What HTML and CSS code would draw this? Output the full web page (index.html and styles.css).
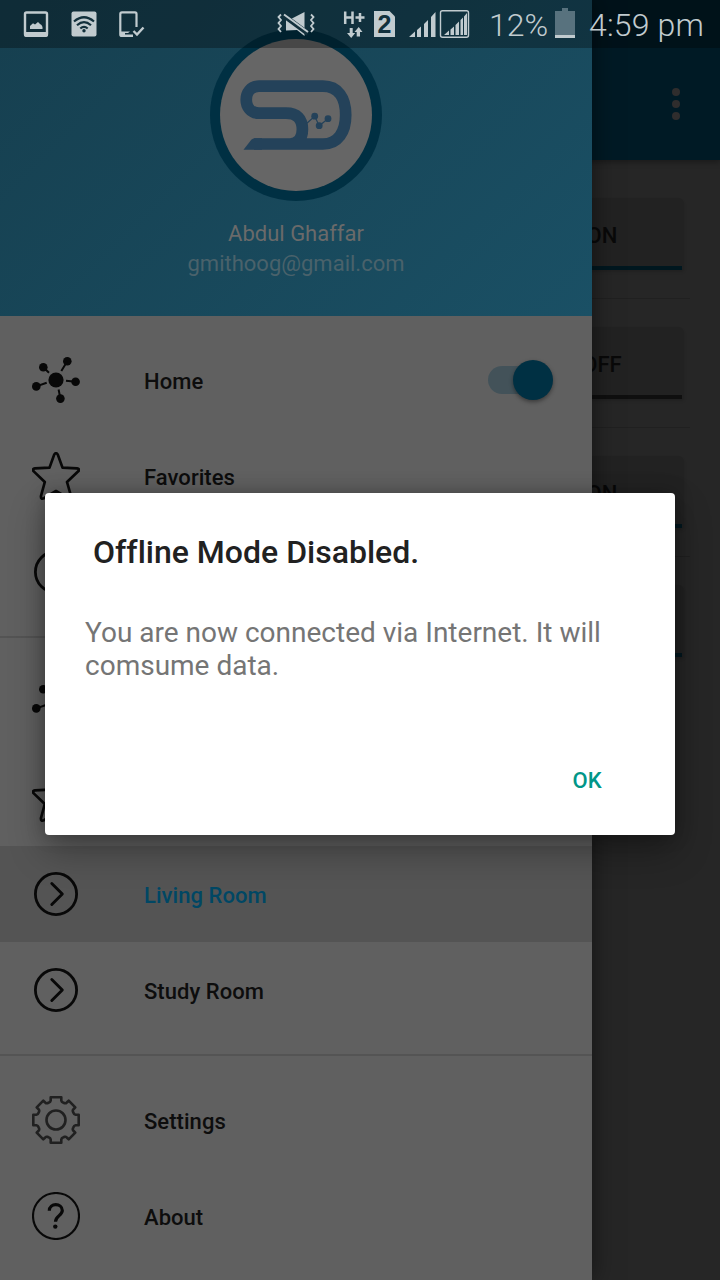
FILE: index.html
```html
<!DOCTYPE html>
<html lang="en">
<head>
<meta charset="utf-8">
<title>Offline Mode</title>
<link rel="stylesheet" href="styles.css">
</head>
<body>
<svg class="defs" width="0" height="0">
  <defs>
    <symbol id="hub" viewBox="0 0 48 48">
      <circle cx="24" cy="24" r="7.6"/>
      <circle cx="11.3" cy="11.3" r="4.3"/><circle cx="35.3" cy="5.2" r="4.3"/><circle cx="43.6" cy="25.7" r="4.3"/><circle cx="28.4" cy="42.6" r="4.3"/><circle cx="4.3" cy="30.4" r="4.3"/>
      <path d="M11.3 11.3L17 16.700M35.3 5.200L29.300 15M43.600 25.700L34 24.700M28.400 42.600L26.600 33.500M4.300 30.400L14.700 26.800" stroke="currentColor" stroke-width="2" fill="none"/>
    </symbol>
    <symbol id="star" viewBox="0 0 48 48">
      <path d="M22.2 2.6Q24 -.3 25.8 2.6L30.5 15.6L45 16.4Q48.5 17 46 19.6L35 30L39 44Q39.4 47.6 36 46.2L24 39L12 46.2Q8.6 47.6 9 44L12.8 30L2 19.6Q-.5 17 3 16.4L17.500 15.600Z" fill="none" stroke="currentColor" stroke-width="2.700" stroke-linejoin="round"/>
    </symbol>
    <symbol id="chevron" viewBox="0 0 48 48">
      <circle cx="24" cy="24" r="20.600" fill="none" stroke="currentColor" stroke-width="2.800"/>
      <path d="M19.800 13.500L30.300 24L19.800 34.500" fill="none" stroke="currentColor" stroke-width="2.900" stroke-linecap="round" stroke-linejoin="round"/>
    </symbol>
  </defs>
</svg>

<div class="screen">
  <main class="page">
    <header class="appbar">
      <svg width="8" height="32" viewBox="0 0 8 32"><circle cx="4" cy="4" r="4"/><circle cx="4" cy="16" r="4"/><circle cx="4" cy="28" r="4"/></svg>
    </header>
    <section class="switches">
      <div class="row"><button class="toggle on">ON</button></div>
      <div class="row"><button class="toggle">OFF</button></div>
      <div class="row"><button class="toggle on">ON</button></div>
      <div class="row last"><button class="toggle on"></button></div>
    </section>
  </main>

  <aside class="drawer">
    <header class="profile">
      <svg class="avatar" viewBox="210 29 172 172">
        <circle cx="296" cy="115" r="86" fill="#003043"/>
        <circle cx="296" cy="115" r="76" fill="#666"/>
        <g fill="none" stroke="#24425a" stroke-width="11.700">
          <path d="M254 144H290C298 144 302.400 138 302.400 129.500C302.400 119 297 113.200 286 113.200H259C242 113.200 242 86.200 259 86.200H323C338 86.200 345.700 98 345.700 115C345.700 132 338 144 323 144H290"/>
        </g>
        <g fill="#24425a">
          <path d="M243.500 149.850L251.500 139.500Q253 138.150 256 138.150H262V149.850Z"/>
          <circle cx="314.700" cy="116.200" r="3.400"/><circle cx="319.200" cy="125.700" r="3.400"/><circle cx="328" cy="118.700" r="3.400"/>
        </g>
        <path d="M306 124L314.700 116.200L319.200 125.700L328 118.700" fill="none" stroke="#24425a" stroke-width="1.200"/>
      </svg>
      <div class="name">Abdul Ghaffar</div>
      <div class="email">gmithoog@gmail.com</div>
    </header>
    <nav>
      <div class="group">
        <a class="item"><svg class="icon"><use href="#hub"/></svg><span>Home</span><i class="switch"><b></b></i></a>
        <a class="item"><svg class="icon"><use href="#star"/></svg><span>Favorites</span></a>
        <a class="item"><svg class="icon"><use href="#chevron"/></svg></a>
      </div>
      <div class="group">
        <a class="item"><svg class="icon"><use href="#hub"/></svg></a>
        <a class="item"><svg class="icon"><use href="#star"/></svg></a>
        <a class="item active"><svg class="icon"><use href="#chevron"/></svg><span>Living Room</span></a>
        <a class="item"><svg class="icon"><use href="#chevron"/></svg><span>Study Room</span></a>
      </div>
      <div class="group">
        <a class="item">
          <svg class="icon soft" viewBox="-24 -24 48 48" fill="none" stroke="currentColor" stroke-width="2.600" stroke-linejoin="round">
            <g id="q"><path d="M0 -22.700H5.300V-19.500Q5.500 -18 7.500 -17.300L8.700 -16.800Q9.800 -16.500 10.500 -17.200L12.700 -19.300L19.300 -12.700L17.200 -10.500Q16.500 -9.800 16.800 -8.700L17.300 -7.500Q18 -5.500 19.500 -5.300H22.700V0"/></g>
            <use href="#q" transform="rotate(90)"/><use href="#q" transform="rotate(180)"/><use href="#q" transform="rotate(270)"/>
            <circle r="9.500"/>
          </svg><span>Settings</span></a>
        <a class="item">
          <svg class="icon" viewBox="0 0 48 48"><circle cx="24" cy="24" r="23" fill="none" stroke="currentColor" stroke-width="2.100"/><path d="M17.300 18.800C17.300 10.600 30.300 10.800 30.300 18.600C30.300 23.400 23.500 24 23.500 29.700" fill="none" stroke="currentColor" stroke-width="3.200"/><circle cx="23.300" cy="34.600" r="2.200"/></svg><span>About</span></a>
      </div>
    </nav>
  </aside>

  <div class="statusbar">
    <svg class="notifs" width="260" height="48" viewBox="0 0 260 48">
      <rect x="25" y="12.500" width="22" height="23" rx="1.500" fill="none" stroke="currentColor" stroke-width="2.400"/><path d="M24 32H48V35Q48 37 46 37H26Q24 37 24 35Z"/>
      <path d="M30 29V26L33 23.300L35 24.500L38 22L40 24L41.500 25L42.500 27V29Z"/>
      <rect x="71.500" y="11.500" width="25" height="25" rx="2"/>
      <g fill="none" stroke="#12303c" stroke-width="2.200"><path d="M74 21.500Q84 13 94 21.500M77 25.300Q84 19 91 25.300M80.300 28.500Q84 25.200 87.700 28.500"/></g><circle cx="84" cy="30.700" r="1.700" fill="#12303c"/>
      <path d="M136.500 27V14Q136.500 12.300 135 12.300H122Q120.300 12.300 120.300 14V34.500Q120.300 36 122 36H132" fill="none" stroke="currentColor" stroke-width="2.200"/><path d="M120 31.500H130L128 33H125V34.500H133V37H121Z"/>
      <path d="M133.500 31L137 34.500L143.500 27.500" fill="none" stroke="currentColor" stroke-width="2.400"/>
    </svg>
    <svg class="signals" width="229" height="48" viewBox="260 0 229 48">
      <path d="M286 19H291L304.500 12V36L297 30L286 30.500Z"/>
      <path d="M283 15L308 33.500" stroke="#12303c" stroke-width="5"/>
      <path d="M284 14.500L308 32" stroke="currentColor" stroke-width="2"/>
      <path d="M281 14.500L278.500 17L281 20L278.500 23L281 26L278.500 29L281 32M311 14.500L313.500 17L311 20L313.500 23L311 26L313.500 29L311 32" fill="none" stroke="currentColor" stroke-width="1.800"/>
      <path d="M345.200 11.500V24M352.500 11.500V24M345 17.500H353M355.500 17.500H364.500M360 13V22" stroke="currentColor" stroke-width="2.500" fill="none"/>
      <path d="M349.700 28H352.700V33H355.200L351.200 38L347 33H349.700ZM356.700 36.500V32H354.500L358.700 27L362.500 32H360V36.500Z"/>
      <path d="M374 11H389.500L395 16.500V37H374Z"/>
      <text x="384.500" y="33" class="sim">2</text>
      <path d="M409 37L415 31.500V37ZM417 30L421 26.500V37H417ZM424 24L428 20V37H424ZM431 17L435.500 12V37H431Z"/>
      <rect x="440.500" y="10.700" width="28" height="26.600" rx="2" fill="none" stroke="currentColor" stroke-width="1.400"/>
      <path d="M444 35L449 30.500V35ZM450.500 29.500L454 26.500V35H450.500ZM455.500 25L459 21.500V35H455.500ZM460.500 20L463 17.500V35H460.500ZM464 16.500L467 13V35H464Z"/>
    </svg>
    <span class="percent">12%</span>
    <svg class="battery" width="20" height="30"><path d="M0 3H7V0H13V3H20V27H0Z" fill="#58727e"/><path d="M0 27H20V30H0Z"/></svg>
    <span class="clock">4:59 pm</span>
  </div>

  <div class="dialog" role="alertdialog">
    <h1>Offline Mode Disabled.</h1>
    <p>You are now connected via Internet. It will comsume data.</p>
    <div class="actions"><button>OK</button></div>
  </div>
</div>
</body>
</html>
```
FILE: styles.css
```css
* { box-sizing: border-box; }
body { margin: 0; font-family: Roboto, "Noto Sans", sans-serif; font-variant-ligatures: none; }
button { border: 0; background: none; padding: 0; font: inherit; }
svg { display: block; fill: currentColor; flex: none; }
.defs { position: absolute; }
.screen { position: relative; width: 720px; height: 1280px; overflow: hidden; background: #262626; }

.page { height: 100%; color: #0b0b0b; }
.appbar { height: 160px; padding: 88px 40px 0 0; background: #001a25; color: #2f2d2d; display: flex; justify-content: flex-end; box-shadow: 0 2px 6px rgba(0,0,0,.35); }
.switches { padding: 10px 30px 0 500px; }
.row { height: 129px; padding: 28px 6px 0 20px; border-bottom: 1px solid #202020; display: flex; align-items: flex-start; }
.row.last { border-bottom: 0; }
.toggle { width: 100%; height: 72px; padding-top: 3px; font-size: 22px; font-weight: 500; color: #090909; background: linear-gradient(#0f0f0f, #0f0f0f) 0 100% / calc(100% - 2px) 4px no-repeat #222; border-radius: 6px 6px 2px 2px; box-shadow: 0 2px 3px rgba(0,0,0,.15); }
.toggle.on { background-image: linear-gradient(#00171f, #00171f); }

.drawer { position: absolute; inset: 0 128px 0 0; background: #606060; box-shadow: 0 0 24px rgba(0,0,0,.5); }
.profile { height: 316px; padding-top: 29px; display: flex; flex-direction: column; align-items: center; background: linear-gradient(135deg, #163f4f, #1a5065); }
.avatar { width: 172px; height: 172px; }
.name { margin-top: 18px; font-size: 22px; line-height: 30px; color: #6a6a6a; }
.email { font-size: 22px; line-height: 30px; color: #4a626b; }
.group { padding: 16px 0; }
.group + .group { border-top: 2px solid #545454; }
.item { height: 96px; padding: 0 39px 0 32px; display: flex; align-items: center; color: #000; }
.item span { margin-left: 64px; padding-top: 2px; font-size: 22px; font-weight: 500; color: #0d0d0d; letter-spacing: .05px; }
.item.active { background: #545454; }
.item.active span { color: #004764; }
.icon { width: 48px; height: 48px; color: #080808; }
.icon.soft { color: #202020; fill: none; }
.switch { margin-left: auto; width: 65px; height: 28px; display: flex; align-items: center; justify-content: flex-end; border-radius: 14px; background: linear-gradient(90deg, #435259 55px, transparent 55px); }
.switch b { width: 40px; height: 40px; border-radius: 50%; background: #003043; box-shadow: 0 2px 4px rgba(0,0,0,.4); }

.statusbar { position: absolute; inset: 0 0 auto; height: 48px; display: flex; background: rgba(0,0,0,.3); color: #c1cbcf; font-size: 32px; line-height: 50px; font-weight: 300; }
.sim { font: bold 25px "Liberation Sans", sans-serif; fill: #12303c; text-anchor: middle; }
.percent { width: 66px; white-space: nowrap; }
.battery { margin-top: 8px; }
.clock { margin-left: 14px; white-space: nowrap; letter-spacing: .15px; }

.dialog { position: absolute; left: 45px; top: 493px; width: 630px; height: 342px; padding: 40px 40px 32px; background: #fff; border-radius: 4px; box-shadow: 0 16px 36px rgba(0,0,0,.3), 0 0 18px rgba(0,0,0,.25); display: flex; flex-direction: column; }
.dialog h1 { margin: 0 8px; font-size: 32px; line-height: 38px; font-weight: 500; color: #212121; }
.dialog p { margin: 45px 0 0; font-size: 28px; line-height: 33px; color: #757575; }
.actions { margin-top: auto; display: flex; justify-content: flex-end; }
.actions button { width: 94px; height: 46px; margin-right: 1px; font-size: 22px; font-weight: 500; color: #009688; }
```
